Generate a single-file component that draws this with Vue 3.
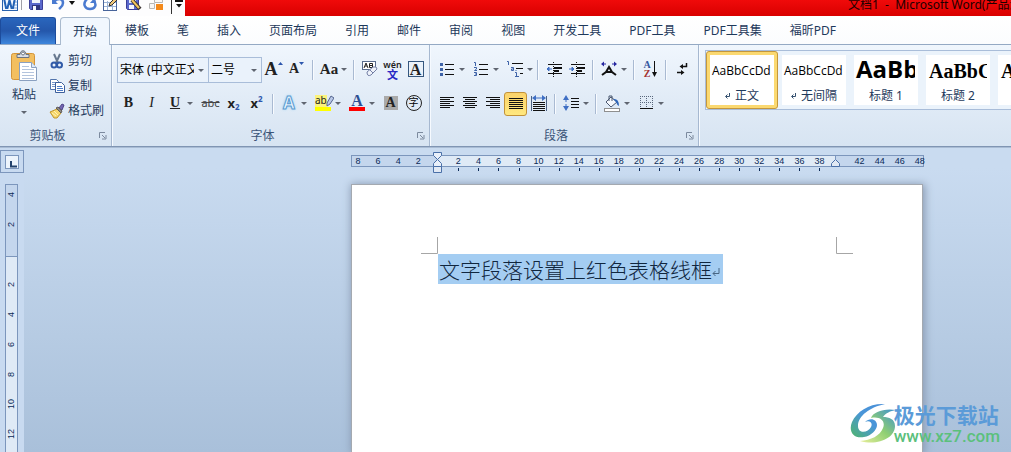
<script setup>
import { ref } from 'vue'

const tabs = ['开始', '模板', '笔', '插入', '页面布局', '引用', '邮件', '审阅', '视图', '开发工具', 'PDF工具', 'PDF工具集', '福昕PDF']
const activeTab = ref('开始')

const styles = [
  { name: '正文', preview: 'AaBbCcDd', kind: 'body', mark: true },
  { name: '无间隔', preview: 'AaBbCcDd', kind: 'body', mark: true },
  { name: '标题 1', preview: 'AaBb', kind: 'h1', mark: false },
  { name: '标题 2', preview: 'AaBbC', kind: 'h2', mark: false },
  { name: '标题', preview: 'AaBbC', kind: 'h2', mark: false }
]
const activeStyle = ref('正文')

const columns = []
for (let n = -8; n <= 48; n += 2) {
  columns.push({ n, text: n === 0 || n === 40 ? '' : String(Math.abs(n)), tick: n > 0 && n < 40 })
}
const rows = [-4, -2, 0, 2, 4, 6, 8, 10, 12, 14]
</script>

<template>
  <div class="app">
    <header class="titlebar">
      <div class="quick">
        <button class="q word" aria-label="Word">
          <svg width="16" height="16" viewBox="0 0 16 16"><rect x=".5" y=".5" width="15" height="15" fill="#f4f9ff" stroke="#2a62ad" /><path d="M11 4h4M11 7h4M11 10h4M11 13h4" stroke="#7da7dc" /><path d="M2 3l2 10h1.500l2-8 2 8H11l2-10" fill="none" stroke="#2463b5" stroke-width="2" /></svg>
        </button>
        <span class="q-sep"></span>
        <button class="q save" aria-label="保存">
          <svg width="14" height="16" viewBox="0 0 14 16"><path d="M.5 1.500h13v13h-12l-1-1z" fill="#5a68cc" stroke="#3c3f98" /><rect x="3" y="2" width="8" height="6" fill="#eef2fb" /><rect x="3" y="10" width="8" height="5" fill="#2f3580" /><rect x="4" y="11" width="3" height="4" fill="#f5f7ff" /></svg>
        </button>
        <button class="q undo" aria-label="撤消">
          <svg width="14" height="16" viewBox="0 0 14 16"><path d="M1 3v6h6z" fill="#4a7ad0" /><path d="M3 7c3-4 9-4 9 1 0 3-2 4-4 6" fill="none" stroke="#4a7ad0" stroke-width="2.500" /></svg>
        </button>
        <button class="q drop" aria-label="撤消列表"><svg width="6" height="4" viewBox="0 0 6 4"><path d="M0 0h6L3 4z" fill="#111" /></svg></button>
        <button class="q redo" aria-label="重复">
          <svg width="14" height="16" viewBox="0 0 14 16"><path d="M4 4C-1 9 2 14 7 14s7-4 4-8" fill="none" stroke="#4a7ad0" stroke-width="2.500" /><path d="M7 8l6 0-1-6z" fill="#4a7ad0" /></svg>
        </button>
        <button class="q table" aria-label="绘制表格">
          <svg width="16" height="16" viewBox="0 0 16 16"><rect x=".5" y="2.500" width="13" height="13" fill="#fff" stroke="#48649a" /><path d="M1 7.500h12M1 11.500h12M4.500 6v9M9.500 6v9" stroke="#9bb3d6" /><path d="M6 11l1-3 6-6 2 2-6 6z" fill="#f0c878" stroke="#2f2f35" /></svg>
        </button>
        <button class="q saveas" aria-label="另存为">
          <svg width="16" height="16" viewBox="0 0 16 16"><path d="M.5 2.500h12v12H1.500l-1-1z" fill="#5a68cc" stroke="#3c3f98" /><rect x="3" y="3" width="7" height="5" fill="#e8eefb" /><rect x="3" y="10" width="5" height="4" fill="#f5f7ff" /><path d="M6 5l8 9" stroke="#3a3232" stroke-width="4" /><path d="M6 5l7 8" stroke="#f2c45c" stroke-width="2" /></svg>
        </button>
        <button class="q boxes" aria-label="构建基块">
          <svg width="16" height="16" viewBox="0 0 16 16"><path d="M5.500 1.500h8v6h-8zM.5 8.500h5v5h-5z" fill="#f8f8f8" stroke="#b7b7b7" /><rect x="7" y="9" width="7" height="6" fill="#f48a1c" /></svg>
        </button>
        <span class="q-sep dark"></span>
        <button class="q more" aria-label="自定义快速访问工具栏"><svg width="8" height="8" viewBox="0 0 8 8"><path d="M0 1h8" stroke="#111" stroke-width="2" /><path d="M1 4h6L4 7.500z" fill="#111" /></svg></button>
      </div>
      <div class="caption">文档1&nbsp; -&nbsp; Microsoft Word(产品激活失败)</div>
    </header>

    <nav class="tabs">
      <button class="file">文件</button>
      <button v-for="t in tabs" :key="t" class="tab" :class="{ on: t === activeTab }" @click="activeTab = t">{{ t }}</button>
    </nav>

    <section class="ribbon">
      <div class="group clipboard">
        <div class="body clip-body">
          <button class="paste">
            <svg width="28" height="32" viewBox="0 0 28 32"><rect x="1.500" y="3.500" width="23" height="26" rx="2" fill="#f3bf60" stroke="#d3953b" /><path d="M7 7.500V4.500h3c0-5 6-5 6 0h3v3z" fill="#d9dee6" stroke="#6b7380" /><circle cx="13" cy="3.500" r="1.500" fill="#fff" stroke="#6b7380" /><path d="M9.500 12.500h12l5 5v13h-17z" fill="#fff" stroke="#8aa0c0" /><path d="M21.500 12.500v5h5" fill="#dce8f6" stroke="#8aa0c0" /><path d="M12 16.500h7M12 19.500h12M12 22.500h12M12 25.500h12M12 28.500h12" stroke="#b3c4dd" /></svg>
            <span>粘贴</span>
            <svg class="arr" width="6" height="3" viewBox="0 0 6 3"><path d="M0 0h6L3 3z" /></svg>
          </button>
          <div class="clip-list">
            <button><svg width="16" height="16" viewBox="0 0 16 16"><path d="M5 1l4 9M11 1L7 10" stroke="#67788f" stroke-width="2" /><circle cx="5" cy="12" r="2.500" fill="none" stroke="#315ba8" stroke-width="2" /><circle cx="10.500" cy="12" r="2.500" fill="none" stroke="#315ba8" stroke-width="2" /></svg>剪切</button>
            <button><svg width="16" height="16" viewBox="0 0 16 16"><path d="M1.500 1.500h6l2 2v8h-8z" fill="#fff" stroke="#5274ac" /><path d="M3 4.500h4M3 6.500h4M3 8.500h4" stroke="#7898cc" /><path d="M6.500 4.500h6l3 3v7h-9z" fill="#fff" stroke="#3c5f9c" /><path d="M8 8.500h5M8 10.500h6M8 12.500h6" stroke="#4c7cc8" /></svg>复制</button>
            <button><svg width="16" height="16" viewBox="0 0 16 16"><path d="M10 5l3-4 2 1-2 5z" fill="#7566b2" stroke="#4c4388" /><path d="M1 9l7-3 4 4-4 5H5z" fill="#f6d66a" stroke="#c0962c" /><path d="M3 10l4 3M5 8l4 4" stroke="#fff3b4" /><path d="M7 5l2-1 4 4-1 2z" fill="#8e8a84" stroke="#5f5b58" /></svg>格式刷</button>
          </div>
        </div>
        <footer><span>剪贴板</span><button class="launch" aria-label="剪贴板选项"><svg width="8" height="8" viewBox="0 0 8 8"><path d="M.5 6V.5H6M3 3l3 3M7 3v4H3" /></svg></button></footer>
      </div>

      <div class="group font">
        <div class="body">
          <div class="row">
            <label class="combo name"><select aria-label="字体"><option>宋体 (中文正文)</option></select><svg class="arr" width="6" height="3" viewBox="0 0 6 3"><path d="M0 0h6L3 3z" /></svg></label>
            <label class="combo size"><select aria-label="字号"><option>二号</option></select><svg class="arr" width="6" height="3" viewBox="0 0 6 3"><path d="M0 0h6L3 3z" /></svg></label>
            <button class="ic" aria-label="增大字体"><b class="serif big">A</b><svg width="5" height="14" viewBox="0 0 5 14"><path d="M0 3h5L2.500 0z" fill="#2c56ad" /></svg></button>
            <button class="ic" aria-label="缩小字体"><b class="serif small">A</b><svg width="5" height="14" viewBox="0 0 5 14"><path d="M0 0h5L2.500 3z" fill="#2c56ad" /></svg></button>
            <i class="sep"></i>
            <button class="split narrow" aria-label="更改大小写"><span class="main"><b class="serif mid">Aa</b></span><svg class="arr" width="6" height="3" viewBox="0 0 6 3"><path d="M0 0h6L3 3z" /></svg></button>
            <i class="sep"></i>
            <button class="ic" aria-label="清除格式"><svg width="18" height="18" viewBox="0 0 18 18"><rect x="1.500" y="1.500" width="13" height="8" fill="#fff" stroke="#586b8c" /><path d="M3 8l2-5 2 5M4 6h2M8.500 3.500h3v4h-3zM8.500 5.500h3" fill="none" stroke="#222" /><path d="M6 12l6-5q4-1 4 2l-6 6q-4 2-4-3z" fill="#eef2fa" stroke="#7480a6" /><path d="M9 10l3 3" stroke="#7480a6" /></svg></button>
            <button class="ic pin" aria-label="拼音指南"><small>wén</small><em>文</em></button>
            <button class="ic" aria-label="字符边框"><b class="serif framed">A</b></button>
          </div>
          <div class="row">
            <button class="ic" aria-label="加粗"><b class="serif t14">B</b></button>
            <button class="ic" aria-label="倾斜"><i class="serif t14">I</i></button>
            <button class="split wide" aria-label="下划线"><span class="main"><b class="serif t14 under">U</b></span><svg class="arr" width="6" height="3" viewBox="0 0 6 3"><path d="M0 0h6L3 3z" /></svg></button>
            <button class="ic" aria-label="删除线"><s class="abc">abc</s></button>
            <button class="ic sx" aria-label="下标"><b>x</b><sub>2</sub></button>
            <button class="ic sx" aria-label="上标"><b>x</b><sup>2</sup></button>
            <i class="sep"></i>
            <button class="split" aria-label="文本效果"><span class="main"><b class="glow">A</b></span><svg class="arr" width="6" height="3" viewBox="0 0 6 3"><path d="M0 0h6L3 3z" /></svg></button>
            <button class="split" aria-label="突出显示"><span class="main"><span class="mark"><span>ab</span><svg width="8" height="12" viewBox="0 0 8 12"><path d="M1 11V8l4-7 3 2-4 6z" fill="#b9c9e8" stroke="#56668f" /></svg></span></span><svg class="arr" width="6" height="3" viewBox="0 0 6 3"><path d="M0 0h6L3 3z" /></svg></button>
            <button class="split" aria-label="字体颜色"><span class="main"><b class="serif ink">A</b></span><svg class="arr" width="6" height="3" viewBox="0 0 6 3"><path d="M0 0h6L3 3z" /></svg></button>
            <button class="ic" aria-label="字符底纹"><b class="serif shade">A</b></button>
            <button class="ic" aria-label="带圈字符"><span class="ring">字</span></button>
          </div>
        </div>
        <footer><span>字体</span><button class="launch" aria-label="字体选项"><svg width="8" height="8" viewBox="0 0 8 8"><path d="M.5 6V.5H6M3 3l3 3M7 3v4H3" /></svg></button></footer>
      </div>

      <div class="group para">
        <div class="body">
          <div class="row">
            <button class="split" aria-label="项目符号"><span class="main"><svg width="14" height="14" viewBox="0 0 14 14"><path d="M5 2.500h9M5 7.500h9M5 12.500h9" stroke="#111" /><path d="M0 1h3v3H0zM0 6h3v3H0zM0 11h3v3H0z" fill="#3e63a8" /></svg></span><svg class="arr" width="6" height="3" viewBox="0 0 6 3"><path d="M0 0h6L3 3z" /></svg></button>
            <button class="split" aria-label="编号"><span class="main"><svg width="14" height="14" viewBox="0 0 14 14"><path d="M5 2.500h9M5 7.500h9M5 12.500h9" stroke="#111" /><path d="M0 .5h1.500V4M0 5.500h2.500v1.500L.5 8.500H3M0 10.500h2.500v3H0M1 12h1.500" fill="none" stroke="#3e63a8" /></svg></span><svg class="arr" width="6" height="3" viewBox="0 0 6 3"><path d="M0 0h6L3 3z" /></svg></button>
            <button class="split multi" aria-label="多级列表"><span class="main"><svg width="16" height="16" viewBox="0 0 16 16"><path d="M5 2.500h11M9 7.500h7M13 12.500h3" stroke="#111" /><path d="M0 .5h1.500V4M4 6.500h2.500v3H4.500V8H6.500M8 11.500h1.500V15M9 9v1M8 15.500h4" fill="none" stroke="#3e63a8" /></svg></span><svg class="arr" width="6" height="3" viewBox="0 0 6 3"><path d="M0 0h6L3 3z" /></svg></button>
            <i class="sep"></i>
            <button class="ic" aria-label="减少缩进"><svg width="16" height="15" viewBox="0 0 16 15"><path d="M2 2.500h14M2 11.500h14" stroke="#111" /><path d="M8 5h8v2H8zM8 8h5v2H8z" fill="#111" /><path d="M7.500 0v15" stroke="#111" stroke-dasharray="1 1" /><path d="M6 7H2M3 5L1 7l2 2z" fill="#3f6fc4" stroke="#3f6fc4" /></svg></button>
            <button class="ic" aria-label="增加缩进"><svg width="16" height="15" viewBox="0 0 16 15"><path d="M2 2.500h14M2 11.500h14" stroke="#111" /><path d="M8 5h8v2H8zM8 8h5v2H8z" fill="#111" /><path d="M7.500 0v15" stroke="#111" stroke-dasharray="1 1" /><path d="M0 7h4M3 5l2 2-2 2z" fill="#3f6fc4" stroke="#3f6fc4" /></svg></button>
            <i class="sep"></i>
            <button class="split narrow" aria-label="中文版式"><span class="main"><svg width="18" height="16" viewBox="0 0 18 16"><path d="M2 14l4-3 3-5 3 5 4 3M6 11h6" fill="none" stroke="#111" stroke-width="2" /><path d="M2 3h4M16 3h-4" stroke="#2727a0" /><path d="M1 3l3-2.500v5zM17 3l-3-2.500v5z" fill="#2727a0" /></svg></span><svg class="arr" width="6" height="3" viewBox="0 0 6 3"><path d="M0 0h6L3 3z" /></svg></button>
            <i class="sep"></i>
            <button class="ic" aria-label="排序"><span class="az"><b>A</b><b>Z</b></span><svg width="5" height="16" viewBox="0 0 5 16"><path d="M2.500 0v13" stroke="#111" /><path d="M0 11h5L2.500 16z" fill="#111" /></svg></button>
            <i class="sep"></i>
            <button class="ic" aria-label="显示编辑标记"><svg width="12" height="14" viewBox="0 0 12 14"><path d="M10.500 1v3.500H6M1 10.500h5" fill="none" stroke="#111" stroke-width="1.500" /><path d="M7 2v5L3.500 4.500zM5 8v5l3.500-2.500z" fill="#111" /></svg></button>
          </div>
          <div class="row">
            <button class="ic" aria-label="左对齐"><svg width="14" height="12" viewBox="0 0 14 12"><path d="M0 .5h14M0 2.500h10M0 4.500h14M0 6.500h10M0 8.500h14M0 10.500h10" stroke="#111" /></svg></button>
            <button class="ic" aria-label="居中"><svg width="14" height="12" viewBox="0 0 14 12"><path d="M0 .5h14M2 2.500h10M0 4.500h14M2 6.500h10M0 8.500h14M2 10.500h10" stroke="#111" /></svg></button>
            <button class="ic" aria-label="右对齐"><svg width="14" height="12" viewBox="0 0 14 12"><path d="M0 .5h14M4 2.500h10M0 4.500h14M4 6.500h10M0 8.500h14M4 10.500h10" stroke="#111" /></svg></button>
            <button class="ic pressed" aria-label="两端对齐"><svg width="14" height="12" viewBox="0 0 14 12"><path d="M0 .5h14M0 2.500h14M0 4.500h14M0 6.500h14M0 8.500h14M0 10.500h14" stroke="#111" /></svg></button>
            <button class="ic" aria-label="分散对齐"><svg width="16" height="16" viewBox="0 0 16 16"><path d="M.5 1v15M15.500 1v15" stroke="#4c6284" /><path d="M2 7.500h12M2 9.500h12M2 11.500h12M2 13.500h12M2 15.500h12" stroke="#111" /><path d="M3 3h10" stroke="#3f6fc4" /><path d="M1 3l4-3v6zM15 3l-4-3v6z" fill="#3f6fc4" /></svg></button>
            <i class="sep"></i>
            <button class="split tight" aria-label="行距"><span class="main"><svg width="16" height="16" viewBox="0 0 16 16"><path d="M8 3.500h8M8 6.500h8M8 9.500h8M8 12.500h8" stroke="#111" /><path d="M3 3v10" stroke="#3f6fc4" stroke-dasharray="4 2" /><path d="M0 5l3-5 3 5zM0 11l3 5 3-5z" fill="#3f6fc4" /></svg></span><svg class="arr" width="6" height="3" viewBox="0 0 6 3"><path d="M0 0h6L3 3z" /></svg></button>
            <i class="sep"></i>
            <button class="split" aria-label="底纹"><span class="main"><svg width="18" height="17" viewBox="0 0 18 17"><path d="M3 7l5-5 6 5-6 5z" fill="#f5f8fd" stroke="#4b5870" /><path d="M6 6V1h3v5" fill="none" stroke="#4b5870" /><path d="M10 4q6-1 6 7-2-1-3-4z" fill="#2f66b8" /><rect x="1.500" y="13.500" width="15" height="3" fill="#fff" stroke="#8f8f8f" /></svg></span><svg class="arr" width="6" height="3" viewBox="0 0 6 3"><path d="M0 0h6L3 3z" /></svg></button>
            <button class="split" aria-label="边框"><span class="main"><svg width="13" height="14" viewBox="0 0 13 14"><path d="M0 .5h13M0 6.500h13M.5 0v12M6.500 0v12M12.500 0v12" stroke="#59677c" stroke-dasharray="1 1" /><path d="M0 12.500h13" stroke="#111" /></svg></span><svg class="arr" width="6" height="3" viewBox="0 0 6 3"><path d="M0 0h6L3 3z" /></svg></button>
          </div>
        </div>
        <footer><span>段落</span><button class="launch" aria-label="段落选项"><svg width="8" height="8" viewBox="0 0 8 8"><path d="M.5 6V.5H6M3 3l3 3M7 3v4H3" /></svg></button></footer>
      </div>

      <div class="gallery">
        <button v-for="s in styles" :key="s.name" class="card" :class="{ sel: s.name === activeStyle }" @click="activeStyle = s.name">
          <span class="paper">
            <span class="preview" :class="s.kind">{{ s.preview }}</span>
            <span class="label"><svg v-if="s.mark" width="5" height="6" viewBox="0 0 5 6"><path d="M4.500 0v3.500H1M2.500 1.500L.5 3.500l2 2" /></svg>{{ s.name }}</span>
          </span>
        </button>
      </div>
    </section>

    <main class="work">
      <aside class="side">
        <button class="tabstop" aria-label="制表符"><span><svg width="7" height="7" viewBox="0 0 7 7"><path d="M1 0v5.500h6" fill="none" stroke="#24436d" stroke-width="2" /></svg></span></button>
        <div class="vruler"><span v-for="r in rows" :key="r">{{ r === 0 ? '' : Math.abs(r) }}</span></div>
      </aside>
      <div class="canvas">
        <div class="hruler">
          <div class="nums"><span v-for="c in columns" :key="c.n" :class="{ tick: c.tick }">{{ c.text }}</span></div>
          <svg class="indent" width="9" height="21" viewBox="0 0 9 21"><path d="M.5.5h8v3l-4 4 4 4v3h-8v-3l4-4-4-4z" fill="#e9f0fa" stroke="#4a70a8" /><path d="M.5 14.500h8v6h-8z" fill="#e1e9f4" stroke="#4a70a8" /></svg>
          <svg class="rindent" width="9" height="12" viewBox="0 0 9 12"><path d="M4.500 0v4" stroke="#7a96bf" /><path d="M.5 11.500v-3l4-4 4 4v3z" fill="#e1e9f4" stroke="#4a70a8" /></svg>
        </div>
        <article class="page">
          <div class="corners">
            <svg width="17" height="17" viewBox="0 0 17 17"><path d="M16.500 0v16.500H0" fill="none" stroke="#a6a6a6" /></svg>
            <svg width="17" height="17" viewBox="0 0 17 17"><path d="M.5 0v16.500H17" fill="none" stroke="#a6a6a6" /></svg>
          </div>
          <p class="text">文字段落设置上红色表格线框<svg width="8" height="9" viewBox="0 0 8 9"><path d="M7 0v5.500H1M3.500 3L1 5.500 3.500 8" /></svg></p>
        </article>
      </div>
    </main>

    <div class="watermark">
      <svg width="48" height="42" viewBox="0 0 48 42">
        <defs>
          <linearGradient id="wm-a" x1="0" y1="1" x2="1" y2="0"><stop offset="0" stop-color="#4fb56b" /><stop offset=".5" stop-color="#4a96d8" /><stop offset="1" stop-color="#4a8fd8" /></linearGradient>
          <linearGradient id="wm-b" x1="0" y1="1" x2="1" y2="0"><stop offset="0" stop-color="#e8ef9a" /><stop offset=".5" stop-color="#8fcf73" /><stop offset="1" stop-color="#3a8fd2" /></linearGradient>
        </defs>
        <path d="M35 1C20 0 7 8 2 19c-4 10 2 17 12 15 7-1 13-7 13-12 0-6-7-8-12-3 5-2 8 1 6 5-3 6-13 7-13-1C8 13 20 4 35 1z" fill="url(#wm-a)" />
        <path d="M46 7C34 5 23 9 21 15c9-2 15 3 12 10-3 8-12 12-23 13 18 5 35-3 35-15 0-7-6-9-12-9 3-4 7-6 13-7z" fill="url(#wm-b)" />
      </svg>
      <div class="wm-text"><strong>极光下载站</strong><span>www.xz7.com</span></div>
    </div>
  </div>
</template>

<style>
body { margin: 0; }
</style>

<style scoped>
.app { position: relative; display: flex; flex-direction: column; height: 100vh; overflow: hidden; font: 12px/16px "Noto Sans", "Noto Sans CJK SC", sans-serif; color: #1e395b; }
.app * { box-sizing: border-box; }
button { appearance: none; margin: 0; padding: 0; border: 0; background: none; font: inherit; color: inherit; }
svg { display: block; flex: none; }
.arr { fill: #5f6570; }

.titlebar { display: flex; flex: none; height: 16px; background: linear-gradient(#f00a0a, #d90000); overflow: hidden; }
.quick { display: flex; flex: none; align-items: flex-start; width: 185px; padding-left: 2px; background: #fdfdfe; }
.q { flex: none; margin-top: -5px; }
.word { width: 16px; }
.q-sep { width: 1px; height: 10px; margin: 0 7px 0 3px; background: #a0a0a8; }
.q-sep.dark { height: 14px; margin: 0 3px 0 8px; background: #333; }
.save { width: 22px; }
.undo { width: 18px; }
.drop { width: 14px; margin-top: 1px; }
.redo { width: 20px; }
.table, .saveas { width: 23px; }
.boxes { width: 14px; }
.more { margin-top: 0; }
.caption { width: 163px; margin-left: auto; margin-top: -3px; color: #1c0000; white-space: nowrap; overflow: hidden; }

.tabs { display: flex; flex: none; height: 29px; padding-top: 1px; background: linear-gradient(#fff, #fbfcfe); border-bottom: 1px solid #94a9c4; }
.file { width: 56px; margin-right: 4px; border: 1px solid #1d4c9c; border-bottom: 0; border-radius: 3px 3px 0 0; background: linear-gradient(#2a66bd, #2457ab 50%, #3e86dc); color: #fff; }
.tab { height: 28px; padding: 0 14px; border-radius: 4px 4px 0 0; white-space: nowrap; }
.tab.on { margin-right: 1px; padding: 0 12px; border: 1px solid #a9bace; border-bottom: 0; background: #f1f7fe; }

.ribbon { display: flex; flex: none; height: 102px; background: linear-gradient(#f0f6fd, #e2ecf7 50%, #d7e4f2); border-bottom: 1px solid #8095b3; overflow: hidden; }
.group { display: flex; flex: none; flex-direction: column; border-right: 1px solid #a6b8d0; box-shadow: 1px 0 #f6faff; }
.clipboard { width: 112px; }
.font { width: 318px; padding-left: 5px; }
.para { width: 269px; padding-left: 5px; }
.body { flex: 1; padding-top: 12px; }
footer { display: flex; height: 21px; align-items: center; text-align: center; color: #3b5478; }
footer span { flex: 1; }
.font footer, .para footer { margin-left: -5px; }
.launch { width: 16px; padding: 0 4px; }
.launch path { fill: none; stroke: #7c8a9e; }
.row { display: flex; align-items: center; height: 26px; margin-bottom: 8px; }
.ic { display: flex; flex: none; align-items: center; justify-content: center; width: 23px; height: 22px; padding-bottom: 2px; color: #222; }
.split { display: flex; flex: none; align-items: center; width: 34px; height: 22px; padding-bottom: 2px; color: #222; }
.split.narrow, .split.tight { width: 32px; }
.split.multi { width: 30px; }
.split.wide { width: 36px; }
.main { display: flex; align-items: center; justify-content: center; width: 24px; }
.sep { width: 1px; height: 20px; margin: 0 4px; background: #a9bad2; box-shadow: 1px 0 #f8fbff; }

.clip-body { display: flex; padding-top: 5px; }
.paste { display: flex; flex-direction: column; align-items: center; width: 48px; height: 68px; }
.paste span { margin: 5px 0 8px; }
.clip-list { display: flex; flex-direction: column; margin-top: -2px; }
.clip-list button { display: flex; align-items: center; gap: 3px; height: 25px; padding-left: 1px; white-space: nowrap; }

.combo { display: flex; align-items: center; gap: 4px; height: 26px; padding: 0 4px 0 2px; border: 1px solid #a9bdd9; background: #eaf2fb; }
.combo.name { width: 92px; margin-right: -1px; }
.combo.size { width: 54px; }
select { appearance: none; flex: 1; min-width: 0; height: 24px; padding: 0; border: 0; outline: 0; background: none; font: inherit; color: #000; overflow: hidden; }

.serif { font-family: "Liberation Serif", serif; line-height: 16px; }
.big { font-size: 18px; }
.small { font-size: 14px; }
.mid { font-size: 15px; }
.t14 { font-size: 14px; }
.under { text-decoration: underline; }
.framed { width: 16px; height: 16px; border: 1px solid #35577f; font-size: 16px; line-height: 15px; }
.pin { flex-direction: column; padding-bottom: 0; }
.pin small { font-size: 9px; line-height: 8px; font-weight: 600; }
.pin em { font-size: 11px; line-height: 11px; font-style: normal; font-weight: 700; color: #2828c4; }
.abc { font-size: 11px; color: #444; }
.sx b { font-size: 13px; line-height: 14px; }
.sx sub, .sx sup { font-size: 8px; line-height: 8px; font-weight: 700; color: #2c56ad; }
.sx sub { margin-top: 8px; }
.sx sup { margin-top: -8px; }
.glow { font-size: 17px; line-height: 18px; color: #e8f4fd; -webkit-text-stroke: 1px #5b9bd0; text-shadow: 0 0 3px #74c1f0; }
.mark { display: flex; width: 16px; height: 16px; border-bottom: 4px solid #ff0; font-size: 10px; line-height: 10px; }
.mark span { background: #fbf37c; }
.mark svg { margin-left: -1px; }
.ink { width: 16px; border-bottom: 4px solid #f00; font-size: 16px; line-height: 12px; text-align: center; color: #2d4f93; }
.shade { width: 14px; height: 14px; background: #aaa; font-size: 14px; line-height: 14px; }
.ring { width: 16px; height: 16px; border: 1px solid #222; border-radius: 50%; font-size: 10px; line-height: 13px; text-align: center; color: #000; }
.az { display: flex; flex-direction: column; width: 9px; font: 10px/9px "Liberation Serif", serif; color: #33569f; }
.az b + b { color: #a33131; }
.pressed { height: 24px; padding: 0; border: 1px solid #c29239; border-radius: 3px; background: linear-gradient(#fbd36a, #ffe87f); }

.gallery { display: flex; flex: 1; min-width: 0; height: 60px; margin: 5px 0 0 6px; border: 1px solid #a9bdd9; border-right: 0; background: #ebf3fb; overflow: hidden; }
.card { flex: none; width: 72px; height: 58px; padding: 3px; border: 1px solid transparent; border-radius: 3px; }
.card.sel { border-color: #c4973c; background: #fbd971; }
.paper { display: flex; flex-direction: column; height: 50px; background: #fff; overflow: hidden; }
.preview { flex: none; height: 33px; margin-right: 3px; padding-left: 3px; text-align: left; color: #000; white-space: nowrap; overflow: hidden; }
.preview.body { margin-right: 0; padding-top: 0; padding-left: 2px; font: 12px/31px "Open Sans", sans-serif; }
.preview.h1 { padding-left: 2px; font: 700 24px/27px "Open Sans", sans-serif; }
.preview.h2 { font: 700 20px/33px "Liberation Serif", serif; }
.label { display: flex; align-items: center; justify-content: center; gap: 5px; white-space: nowrap; }
.label svg path { fill: none; stroke: #35506f; }

.work { display: flex; flex: 1; min-height: 0; border-top: 1px solid #a9bcd4; background: linear-gradient(#c9dbf0 20px, #a9c0da); overflow: hidden; }
.side { display: flex; flex: none; flex-direction: column; width: 24px; padding-top: 2px; background: #c8daf0; }
.tabstop { display: flex; flex: none; align-items: center; justify-content: center; height: 23px; border: 1px solid #7c96bc; }
.tabstop span { width: 14px; height: 14px; padding: 5px 0 0 4px; border: 1px solid #7c96bc; background: #edf4fc; }
.vruler { display: flex; flex-direction: column; flex: none; width: 13px; margin: 11px 0 0 5px; border: 1px solid #7c96bc; background: linear-gradient(#c4d6ed 71px, #7c96bc 71px 72px, #dfeaf6 72px); }
.vruler span { display: flex; align-items: center; justify-content: center; flex: none; height: 30px; writing-mode: vertical-rl; transform: rotate(180deg); font: 9px/11px "Liberation Sans", sans-serif; color: #0b2a58; }
.vruler span:first-child { height: 24px; padding-top: 6px; }
.canvas { display: flex; flex: 1; flex-direction: column; min-width: 0; padding: 7px 0 0 327px; }
.hruler { position: relative; flex: none; width: 573px; height: 12px; border: 1px solid #7c96bc; background: linear-gradient(to right, #c4d6ed 86px, #dfeaf6 86px 484px, #c4d6ed 484px); }
.nums { display: flex; margin: 0 -7px 0 -4px; }
.nums span { position: relative; flex: 1; height: 10px; font: 9px/10px "Liberation Sans", sans-serif; text-align: center; color: #0b2a58; }
.tick::after { content: ""; position: absolute; left: 50%; top: 12px; width: 1px; height: 3px; background: #0b2a58; }
.indent { position: absolute; left: 81px; top: -4px; }
.rindent { position: absolute; left: 479px; top: -1px; }
.page { flex: 1; width: 572px; margin-top: 17px; padding: 52px 69px 0; border: 1px solid #a4a9b0; border-bottom: 0; background: #fff; box-shadow: 1px 1px 8px 1px #8a9bb3; }
.corners { display: flex; justify-content: space-between; }
.text { display: flex; align-items: center; width: max-content; height: 30px; margin: 0 0 0 17px; padding: 0 3px 0 1px; background: #a4cdf2; font: 300 21px/28px "Noto Sans CJK SC", sans-serif; color: #10263e; }
.text svg { margin-top: 6px; }
.text path { fill: none; stroke: #486684; }

.watermark { position: absolute; right: 11px; bottom: 7px; display: flex; align-items: center; pointer-events: none; }
.wm-text { display: flex; flex-direction: column; margin-left: -4px; }
.wm-text strong { margin-top: -4px; font: 700 21px/28px "Noto Sans CJK SC", sans-serif; color: #5b9bd8; }
.wm-text span { font: 500 17px/17px Roboto, sans-serif; color: #5bc07c; }
</style>
